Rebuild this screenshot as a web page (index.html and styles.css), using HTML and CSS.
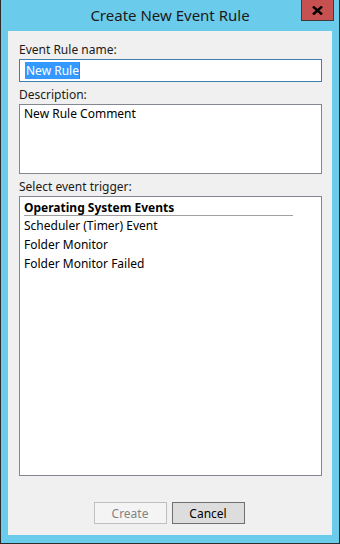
FILE: index.html
```html
<!DOCTYPE html>
<html lang="en">
<head>
  <meta charset="UTF-8">
  <meta name="viewport" content="width=device-width, initial-scale=1.0">
  <title>Create New Event Rule</title>
  <link rel="stylesheet" href="styles.css">
</head>
<body>
  <div class="window">
    <div class="titlebar">
      <div class="title">Create New Event Rule</div>
      <button class="close" aria-label="Close">
        <svg width="11" height="9" viewBox="0 0 11 9">
          <path d="M1 0.5 L10 8.5 M10 0.5 L1 8.5" stroke="#000" stroke-width="2.4" fill="none"/>
        </svg>
      </button>
    </div>
    <div class="content">
      <div class="label">Event Rule name:</div>
      <div class="textbox focused"><span class="selected">New Rule</span></div>

      <div class="label gap">Description:</div>
      <div class="textarea">New Rule Comment</div>

      <div class="label gap">Select event trigger:</div>
      <div class="listbox">
        <div class="group">Operating System Events</div>
        <div class="item">Scheduler (Timer) Event</div>
        <div class="item">Folder Monitor</div>
        <div class="item">Folder Monitor Failed</div>
      </div>

      <div class="actions">
        <button class="btn" disabled>Create</button>
        <button class="btn default">Cancel</button>
      </div>
    </div>
  </div>
</body>
</html>
```

FILE: styles.css
```css
body {
  margin: 0;
  font-family: "Noto Sans", "Open Sans", sans-serif;
  font-size: 12px;
  color: #000;
  background-color: #fff;
}

.window {
  width: 340px;
  height: 544px;
  box-sizing: border-box;
  display: flex;
  flex-direction: column;
  border: 1px solid #2b2b2b;
  border-top: none;
  padding: 0 7px 8px 7px;
  background-color: #6bcbea;
}

.titlebar {
  position: relative;
  height: 31px;
  display: flex;
  justify-content: center;
  align-items: center;
}

.title {
  font-size: 15px;
  color: #1a1a1a;
  padding-bottom: 1px;
}

.close {
  position: absolute;
  top: 0;
  right: -2px;
  width: 33px;
  height: 21px;
  padding: 0;
  display: flex;
  justify-content: center;
  align-items: center;
  border: 1px solid #3c3c3c;
  border-top: none;
  background-color: #c75050;
}

.content {
  flex: 1;
  display: flex;
  flex-direction: column;
  padding: 11px 10px 0 11px;
  background-color: #f0f0f0;
}

.label {
  height: 16px;
  line-height: 16px;
  margin-bottom: 1px;
  color: #1a1a1a;
}

.label.gap {
  margin-top: 5px;
}

.textbox {
  height: 23px;
  box-sizing: border-box;
  padding: 2px 5px;
  line-height: 17px;
  background-color: #fff;
  border: 1px solid #abadb3;
}

.textbox.focused {
  border-color: #3c7fb1;
}

.selected {
  display: inline-block;
  background-color: #3399ff;
  color: #fff;
  padding: 0 0 0 1px;
  border-right: 1px solid #c86400;
}

.textarea {
  height: 70px;
  box-sizing: border-box;
  padding: 0 4px;
  line-height: 17px;
  background-color: #fff;
  border: 1px solid #828790;
}

.listbox {
  height: 280px;
  box-sizing: border-box;
  padding: 2px 4px;
  background-color: #fff;
  border: 1px solid #828790;
}

.group {
  width: 269px;
  height: 16px;
  line-height: 17px;
  font-weight: bold;
  border-bottom: 1px solid #a0a0a0;
}

.item {
  height: 19px;
  line-height: 19px;
}

.actions {
  display: flex;
  justify-content: center;
  gap: 5px;
  margin-top: 26px;
  padding-right: 3px;
}

.btn {
  width: 73px;
  height: 22px;
  padding: 0;
  font-family: inherit;
  font-size: 12px;
  color: #000;
  background-color: #dddddd;
  border: 1px solid #707070;
}

.btn:disabled {
  color: #838383;
  background-color: #f4f4f4;
  border-color: #bfbfbf;
}
```
